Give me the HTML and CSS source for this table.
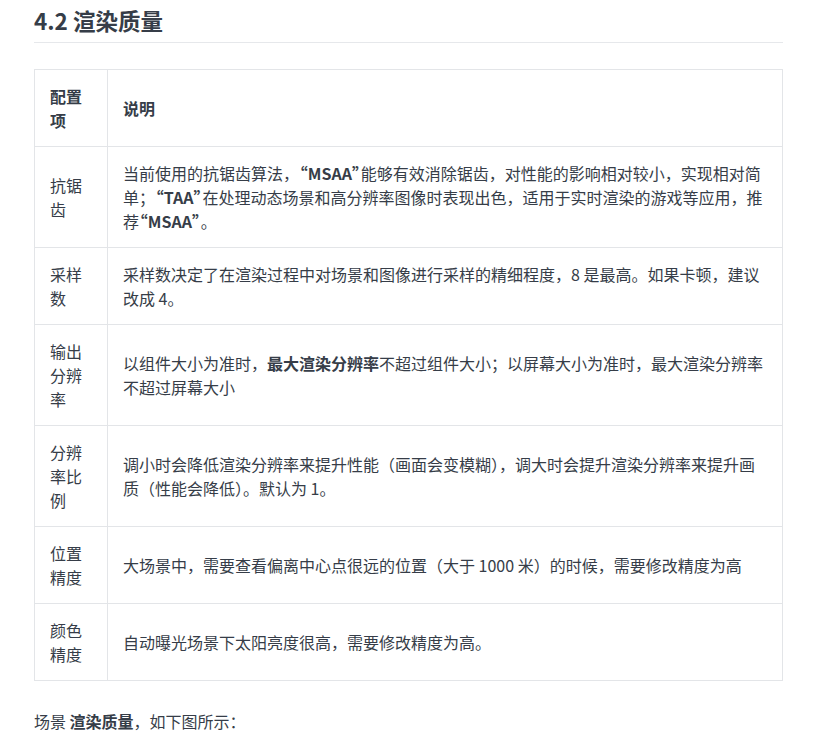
FILE: index.html
```html
<!DOCTYPE html>
<html lang="zh-CN">
<head>
<meta charset="utf-8">
<title>4.2 渲染质量</title>
<link rel="stylesheet" href="styles.css">
</head>
<body>
<div class="content">
  <h2 class="title">4.2 渲染质量</h2>
  <table class="cfg">
    <thead>
      <tr><th class="c1">配置项</th><th>说明</th></tr>
    </thead>
    <tbody>
      <tr><td class="c1">抗锯齿</td><td class="quoted">当前使用的抗锯齿算法，<strong><span class="ql">“</span>MSAA<span class="qr">”</span></strong>能够有效消除锯齿，对性能的影响相对较小，实现相对简单；<strong><span class="ql">“</span>TAA<span class="qr">”</span></strong>在处理动态场景和高分辨率图像时表现出色，适用于实时渲染的游戏等应用，推荐<strong><span class="ql">“</span>MSAA<span class="qr">”</span></strong>。</td></tr>
      <tr><td class="c1">采样数</td><td>采样数决定了在渲染过程中对场景和图像进行采样的精细程度，8 是最高。如果卡顿，建议改成 4。</td></tr>
      <tr><td class="c1">输出分辨率</td><td>以组件大小为准时，<strong>最大渲染分辨率</strong>不超过组件大小；以屏幕大小为准时，最大渲染分辨率不超过屏幕大小</td></tr>
      <tr><td class="c1">分辨率比例</td><td>调小时会降低渲染分辨率来提升性能（画面会变模糊），调大时会提升渲染分辨率来提升画质（性能会降低）。默认为 1。</td></tr>
      <tr><td class="c1">位置精度</td><td>大场景中，需要查看偏离中心点很远的位置（大于 1000 米）的时候，需要修改精度为高</td></tr>
      <tr><td class="c1">颜色精度</td><td>自动曝光场景下太阳亮度很高，需要修改精度为高。</td></tr>
    </tbody>
  </table>
  <p class="note">场景 <strong>渲染质量</strong>，如下图所示：</p>
</div>
</body>
</html>
```

FILE: styles.css
```css
html, body {
  margin: 0;
  padding: 0;
  background: #ffffff;
}
body {
  font-family: "Noto Sans CJK SC", "Noto Sans", sans-serif;
  font-size: 16px;
  line-height: 1.5;
  color: #363d48;
}
.content {
  width: 749px;
  margin-left: 34px;
  padding-top: 6px;
}
.title {
  margin: 0;
  font-size: 22.5px;
  font-weight: 700;
  line-height: 1.3;
  padding-bottom: 7px;
  border-bottom: 1px solid #e6e8eb;
  color: #363d48;
}
.cfg {
  margin-top: 26px;
  width: 100%;
  border-collapse: collapse;
}
.cfg th, .cfg td {
  border: 1px solid #e3e5e8;
  padding: 14px 15px;
  text-align: left;
  vertical-align: middle;
}
.cfg th {
  font-weight: 700;
}
.cfg .c1 {
  width: 42px;
}
.cfg strong {
  font-weight: 700;
}
.cfg .quoted {
  text-spacing-trim: space-all;
}
.ql {
  margin-left: -0.45em;
}
.qr {
  margin-right: -0.45em;
}
.note {
  margin: 28px 0 0;
}
.note strong {
  font-weight: 700;
}
```
